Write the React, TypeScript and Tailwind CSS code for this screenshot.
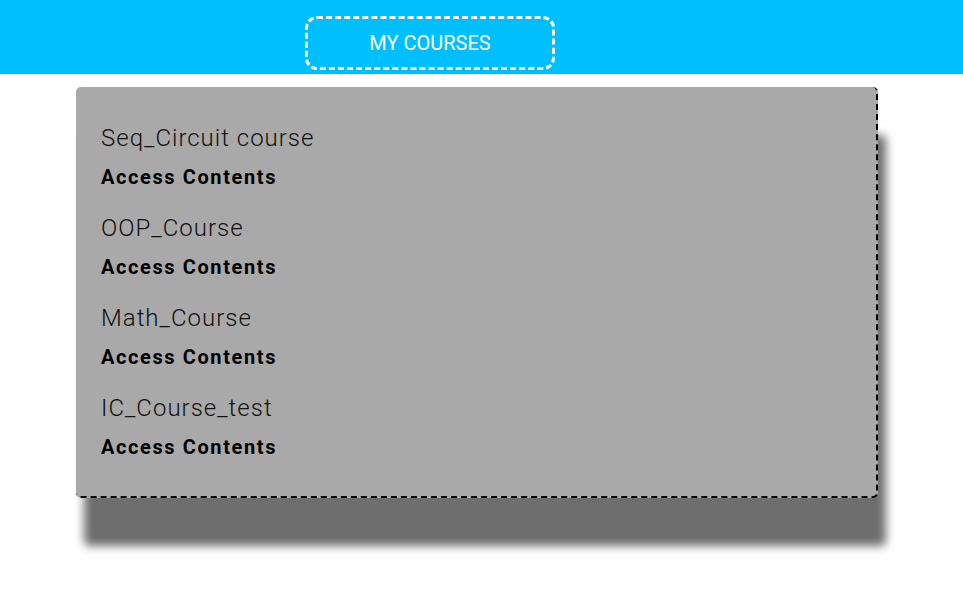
import React from "react";

const courses = ["Seq_Circuit course", "OOP_Course", "Math_Course", "IC_Course_test"];

export default function App() {
  return (
    <div className="min-h-[598px] w-full bg-white" style={{ fontFamily: "Roboto, 'Liberation Sans', sans-serif" }}>
      <header className="h-[74px] w-full bg-[#00bfff] pt-[16px]">
        <div className="ml-[305px] flex h-[54px] w-[250px] items-center justify-center rounded-[12px] border-[3px] border-dashed border-white pb-[1px] text-[20px] text-white">
          MY COURSES
        </div>
      </header>
      <main className="pt-[13px]">
        <div className="ml-[76px] w-[802px] rounded-[5px] border-b-2 border-r-2 border-dashed border-black bg-[#a9a9a9] pb-[13px] pl-[25px] pt-[36px] shadow-[8px_48px_10px_#6e6e6e]">
          {courses.map((c) => (
            <div key={c} className="pb-[24px]">
              <div className="h-[30px] text-[24px] font-light leading-[30px] tracking-[1px] text-[#111]">{c}</div>
              <div className="mt-[12px] h-[24px] text-[20px] font-bold leading-[24px] tracking-[1.6px] text-black">Access Contents</div>
            </div>
          ))}
        </div>
      </main>
    </div>
  );
}
